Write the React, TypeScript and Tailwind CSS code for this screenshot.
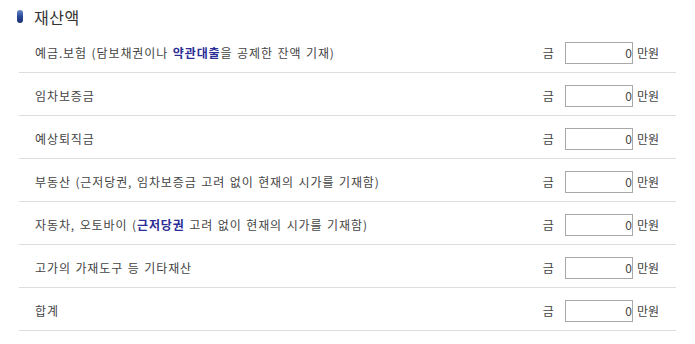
const rows: { label: React.ReactNode }[] = [
  {
    label: (
      <>
        예금.보험 (담보채권이나 <b className="font-bold text-[#2b2d96]">약관대출</b>을 공제한 잔액 기재)
      </>
    ),
  },
  { label: "임차보증금" },
  { label: "예상퇴직금" },
  { label: "부동산 (근저당권, 임차보증금 고려 없이 현재의 시가를 기재함)" },
  {
    label: (
      <>
        자동차, 오토바이 (<b className="font-bold text-[#2b2d96]">근저당권</b> 고려 없이 현재의 시가를 기재함)
      </>
    ),
  },
  { label: "고가의 가재도구 등 기타재산" },
  { label: "합계" },
];

export default function App() {
  return (
    <div
      className="w-[695px] h-[344px] bg-white text-[#333]"
      style={{ fontFamily: '"Noto Sans CJK KR", "Noto Sans", sans-serif' }}
    >
      <div className="flex items-center h-[30px] pl-[17px] pt-[3px]">
        <span className="inline-block w-[6px] h-[13px] rounded-full bg-gradient-to-b from-[#6b86c8] via-[#2c4a9a] to-[#1c2f70]" />
        <h2 className="ml-[11px] text-[16px] leading-none text-[#333] tracking-[0.5px]">재산액</h2>
      </div>

      <ul className="ml-[19px] w-[657px]">
        {rows.map((r, i) => (
          <li
            key={i}
            className="flex items-center h-[43px] pt-[3px] border-b border-[#ddd] text-[12px] pl-[16px]"
          >
            <span className="flex-1 text-[#444] tracking-[0.9px] [word-spacing:1px]">{r.label}</span>
            <span className="text-[#444] mr-[11px]">금</span>
            <input
              readOnly
              value="0"
              className="w-[68px] h-[22px] border border-[#a9a9a9] text-right text-[12px] text-[#444] pl-[1px] pr-0 outline-none"
            />
            <span className="ml-[4px] mr-[17px] text-[#444]">만원</span>
          </li>
        ))}
      </ul>
    </div>
  );
}
